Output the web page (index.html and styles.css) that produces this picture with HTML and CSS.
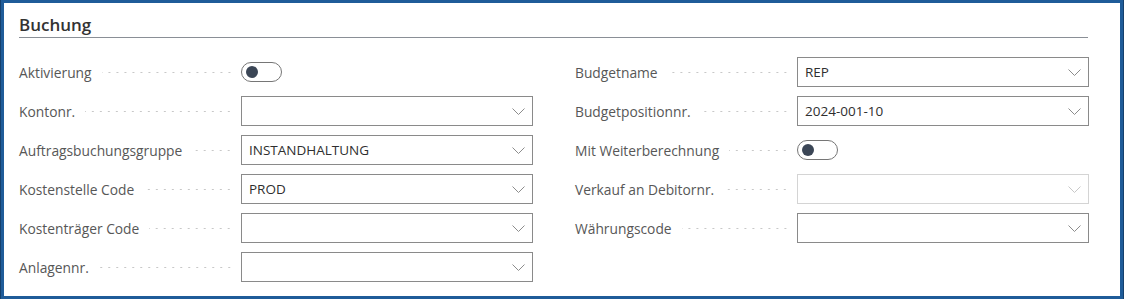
FILE: index.html
```html
<!DOCTYPE html>
<html lang="de">
<head>
    <meta charset="UTF-8">
    <title>Buchung</title>
    <link rel="stylesheet" href="styles.css">
</head>
<body>
    <div class="frame">
        <div class="section">
            <h2 class="section-title">Buchung</h2>
            <div class="columns">
                <div class="column">
                    <div class="field">
                        <span class="label">Aktivierung</span><span class="leader"></span>
                        <div class="toggle"><span class="knob"></span></div>
                    </div>
                    <div class="field">
                        <span class="label">Kontonr.</span><span class="leader"></span>
                        <div class="select"><span class="value"></span><svg class="chevron" viewBox="0 0 13 7"><polyline points="0.5,0.5 6.5,6.5 12.5,0.5"/></svg></div>
                    </div>
                    <div class="field">
                        <span class="label">Auftragsbuchungsgruppe</span><span class="leader"></span>
                        <div class="select"><span class="value">INSTANDHALTUNG</span><svg class="chevron" viewBox="0 0 13 7"><polyline points="0.5,0.5 6.5,6.5 12.5,0.5"/></svg></div>
                    </div>
                    <div class="field">
                        <span class="label">Kostenstelle Code</span><span class="leader"></span>
                        <div class="select"><span class="value">PROD</span><svg class="chevron" viewBox="0 0 13 7"><polyline points="0.5,0.5 6.5,6.5 12.5,0.5"/></svg></div>
                    </div>
                    <div class="field">
                        <span class="label">Kostenträger Code</span><span class="leader"></span>
                        <div class="select"><span class="value"></span><svg class="chevron" viewBox="0 0 13 7"><polyline points="0.5,0.5 6.5,6.5 12.5,0.5"/></svg></div>
                    </div>
                    <div class="field">
                        <span class="label">Anlagennr.</span><span class="leader"></span>
                        <div class="select"><span class="value"></span><svg class="chevron" viewBox="0 0 13 7"><polyline points="0.5,0.5 6.5,6.5 12.5,0.5"/></svg></div>
                    </div>
                </div>
                <div class="column">
                    <div class="field">
                        <span class="label">Budgetname</span><span class="leader"></span>
                        <div class="select"><span class="value">REP</span><svg class="chevron" viewBox="0 0 13 7"><polyline points="0.5,0.5 6.5,6.5 12.5,0.5"/></svg></div>
                    </div>
                    <div class="field">
                        <span class="label">Budgetpositionnr.</span><span class="leader"></span>
                        <div class="select"><span class="value">2024-001-10</span><svg class="chevron" viewBox="0 0 13 7"><polyline points="0.5,0.5 6.5,6.5 12.5,0.5"/></svg></div>
                    </div>
                    <div class="field">
                        <span class="label">Mit Weiterberechnung</span><span class="leader"></span>
                        <div class="toggle"><span class="knob"></span></div>
                    </div>
                    <div class="field">
                        <span class="label">Verkauf an Debitornr.</span><span class="leader"></span>
                        <div class="select disabled"><span class="value"></span><svg class="chevron" viewBox="0 0 13 7"><polyline points="0.5,0.5 6.5,6.5 12.5,0.5"/></svg></div>
                    </div>
                    <div class="field">
                        <span class="label">Währungscode</span><span class="leader"></span>
                        <div class="select"><span class="value"></span><svg class="chevron" viewBox="0 0 13 7"><polyline points="0.5,0.5 6.5,6.5 12.5,0.5"/></svg></div>
                    </div>
                </div>
            </div>
        </div>
    </div>
</body>
</html>
```

FILE: styles.css
```css
body {
    margin: 0;
    background: white;
    font-family: "Open Sans", "Noto Sans", sans-serif;
    color: #333;
}

.frame {
    margin: 0 3px 0 1px;
    height: 293px;
    border: 3px solid #1f5c99;
    box-shadow: 0 0 0 1px #15406d;
    background: white;
}

.section {
    padding: 11px 32px 0 15px;
}

.section-title {
    margin: 0;
    font-size: 17px;
    font-weight: 600;
    color: #333;
    line-height: 22px;
    padding-bottom: 1px;
    border-bottom: 1px solid #8a8f96;
}

.columns {
    display: grid;
    grid-template-columns: 514px 514px;
    column-gap: 42px;
    margin-top: 19px;
}

.column {
    display: flex;
    flex-direction: column;
    gap: 9px;
}

.field {
    display: flex;
    align-items: center;
    height: 30px;
}

.label {
    font-size: 13.8px;
    color: #575757;
    white-space: nowrap;
}

.leader {
    width: 0;
    flex: 1;
    height: 3px;
    margin: 1px 8px 0 10px;
    background-image: radial-gradient(circle, #c8c8c8 0.7px, transparent 1px);
    background-size: 8px 3px;
    background-position: right center;
}

.select {
    box-sizing: border-box;
    width: 292px;
    height: 30px;
    border: 1px solid #8a8a8a;
    display: flex;
    align-items: center;
    justify-content: space-between;
    padding: 0 7px 0 7px;
}

.value {
    font-size: 13.5px;
    color: #2f2f2f;
}

.chevron {
    width: 13px;
    height: 7px;
    fill: none;
    stroke: #8c8c8c;
    stroke-width: 1;
}

.select.disabled {
    border-color: #d4d4d4;
}

.select.disabled .chevron {
    stroke: #c8c8c8;
}

.toggle {
    width: 292px;
    display: flex;
    align-items: center;
}

.knob {
    box-sizing: border-box;
    width: 41px;
    height: 20px;
    border: 1px solid #767676;
    border-radius: 10px;
    position: relative;
}

.knob::after {
    content: "";
    position: absolute;
    left: 4px;
    top: 3px;
    width: 12px;
    height: 12px;
    border-radius: 50%;
    background: #3b4656;
}
```
